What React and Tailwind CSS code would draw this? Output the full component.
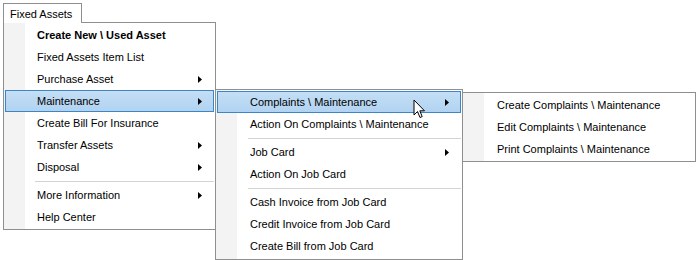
import React from "react";

const Arrow = () => (
  <svg width="4" height="7" viewBox="0 0 4 7" className="shrink-0">
    <path d="M0 0 L4 3.5 L0 7 Z" fill="#000" />
  </svg>
);

const Item = ({ label, sub, bold, active, pl = "pl-[32px]" }) => (
  <div
    className={
      "h-[22px] flex items-center justify-between pr-[11px] border " +
      pl +
      " " +
      (active
        ? "border-[#3d86c6] bg-[linear-gradient(to_bottom,#c4def5,#b1d3f1)]"
        : "border-transparent")
    }
  >
    <span className={bold ? "font-bold" : ""}>{label}</span>
    {sub ? <Arrow /> : null}
  </div>
);

const Sep = ({ ml }) => (
  <div className="h-[6px] flex flex-col justify-start pt-[3px]">
    <div className={"h-px bg-[#d4d4d4] " + ml} />
  </div>
);

const menuBase =
  "absolute bg-white border border-[#8f8f8f] p-px bg-[linear-gradient(to_right,#f3f3f3_0px,#f3f3f3_21px,#ffffff_21px)]";

export default function App() {
  const p1 = "pl-[31px]";
  return (
    <div
      className="relative w-[696px] h-[260px] bg-white overflow-hidden text-[11px] text-black leading-none"
      style={{ fontFamily: '"Liberation Sans", Arial, sans-serif' }}
    >
      {/* Tab */}
      <div className="absolute left-[3px] top-[3px] w-[79px] h-[20px] bg-white border-t border-l border-r border-[#8f8f8f] z-10 pl-[6px] pt-[5px]">
        Fixed Assets
      </div>

      {/* Menu 1 */}
      <div className={menuBase + " left-[3px] top-[22px] w-[213px] h-[208px]"}>
        <Item pl={p1} label="Create New \ Used Asset" bold />
        <Item pl={p1} label="Fixed Assets Item List" />
        <Item pl={p1} label="Purchase Asset" sub />
        <Item pl={p1} label="Maintenance" sub active />
        <Item pl={p1} label="Create Bill For Insurance" />
        <Item pl={p1} label="Transfer Assets" sub />
        <Item pl={p1} label="Disposal" sub />
        <Sep ml="ml-[30px]" />
        <Item pl={p1} label="More Information" sub />
        <Item pl={p1} label="Help Center" />
      </div>

      {/* Menu 2 */}
      <div className={menuBase + " left-[215px] top-[89px] w-[248px] h-[171px] z-20"}>
        <Item label="Complaints \ Maintenance" sub active />
        <Item label="Action On Complaints \ Maintenance" />
        <Sep ml="ml-[31px]" />
        <Item label="Job Card" sub />
        <Item label="Action On Job Card" />
        <Sep ml="ml-[31px]" />
        <Item label="Cash Invoice from Job Card" />
        <Item label="Credit Invoice from Job Card" />
        <Item label="Create Bill from Job Card" />
      </div>

      {/* Menu 3 */}
      <div className={menuBase + " left-[462px] top-[92px] w-[234px] h-[70px] z-30"}>
        <Item label="Create Complaints \ Maintenance" />
        <Item label="Edit Complaints \ Maintenance" />
        <Item label="Print Complaints \ Maintenance" />
      </div>

      {/* Mouse cursor */}
      <svg
        className="absolute left-[413px] top-[99px] z-40"
        width="13"
        height="20"
        viewBox="0 0 13 20"
      >
        <path
          d="M1 1 L1 16 L4.5 12.5 L7 18.5 L9.2 17.6 L6.8 11.8 L11.5 11.8 Z"
          fill="#fff"
          stroke="#000"
          strokeWidth="1"
          strokeLinejoin="miter"
        />
      </svg>
    </div>
  );
}
